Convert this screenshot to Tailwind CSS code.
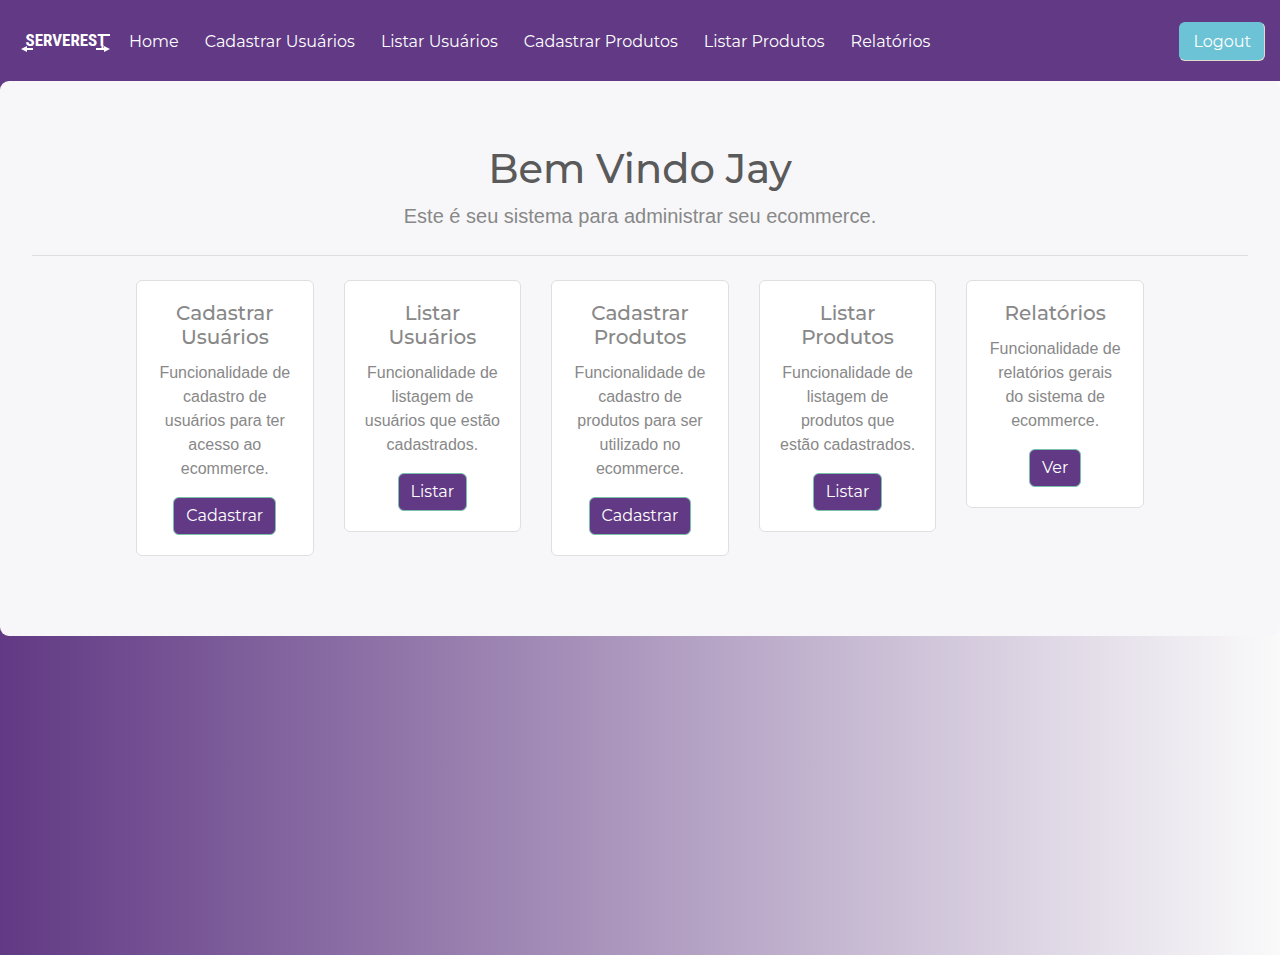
<!DOCTYPE html>
<html lang="pt-BR">
<head>
<meta charset="utf-8">
<meta name="viewport" content="width=device-width, initial-scale=1">
<title>Serverest</title>
<script src="https://cdn.jsdelivr.net/npm/@tailwindcss/browser@4"></script>
</head>
<body class="min-h-screen bg-linear-to-r/srgb from-[#613984] to-[#fafafa] font-['Liberation_Sans',Arial,sans-serif] text-base text-[#888888]">
<nav class="flex items-center bg-[#613984] px-4 pt-[22px] pb-5 font-['Montserrat','Inter',sans-serif] leading-6 text-white">
  <a href="#" aria-label="Serverest" class="ml-1 mr-[17px] flex w-[92px] shrink-0">
    <svg viewBox="0 0 92 28" class="h-7 w-full" fill="none" stroke="currentColor">
      <text x="46" y="18" text-anchor="middle" font-family="'Roboto Condensed','Open Sans Condensed','Roboto','Liberation Sans',sans-serif" font-weight="700" font-size="17" fill="currentColor" stroke="none">SERVEREST</text>
      <path d="M78 7H90" stroke-width="2"/>
      <path d="M82.500 17V22" stroke-width="2"/>
      <path d="M6 21H13M76 21H86" stroke-width="2"/>
      <path d="M1 21L7 18V24ZM90 21L84 18V24Z" fill="currentColor" stroke="none"/>
    </svg>
  </a>
  <div class="flex flex-1 gap-[26px] whitespace-nowrap">
    <a href="#">Home</a>
    <a href="#">Cadastrar Usuários</a>
    <a href="#">Listar Usuários</a>
    <a href="#">Cadastrar Produtos</a>
    <a href="#">Listar Produtos</a>
    <a href="#">Relatórios</a>
  </div>
  <button type="button" class="-mr-px h-[39px] rounded-md border border-[#6cc3d5] border-r-[#e2dccf] border-b-[#e2dccf] bg-[#6cc3d5] px-[13px]">Logout</button>
</nav>
<div class="bg-linear-to-r/srgb from-[#613984] to-[#fafafa]">
<main class="rounded-[9px] bg-[#f7f7f9] px-8 pt-16 pb-20 text-center">
  <h1 class="mb-2 font-['Montserrat','Inter',sans-serif] text-[40px] leading-12 font-medium text-[#5a5a5a]">Bem Vindo Jay</h1>
  <p class="text-xl leading-[30px]">Este é seu sistema para administrar seu ecommerce.</p>
  <hr class="my-6 border-[#dedee0]">
  <div class="mx-auto grid max-w-[1008px] grid-cols-5 items-start gap-[30px]">
    <article class="rounded-md border border-[#dfdfdf] bg-white p-5">
      <h2 class="mb-3 font-['Montserrat','Inter',sans-serif] text-xl leading-6 font-medium">Cadastrar Usuários</h2>
      <p class="mb-4">Funcionalidade de cadastro de usuários para ter acesso ao ecommerce.</p>
      <button type="button" class="block mx-auto h-[38px] rounded-md border border-[#78c2ad] bg-[#613984] px-3 font-['Montserrat','Inter',sans-serif] text-white">Cadastrar</button>
    </article>
    <article class="rounded-md border border-[#dfdfdf] bg-white p-5">
      <h2 class="mb-3 font-['Montserrat','Inter',sans-serif] text-xl leading-6 font-medium">Listar Usuários</h2>
      <p class="mb-4">Funcionalidade de listagem de usuários que estão cadastrados.</p>
      <button type="button" class="block mx-auto h-[38px] rounded-md border border-[#78c2ad] bg-[#613984] px-3 font-['Montserrat','Inter',sans-serif] text-white">Listar</button>
    </article>
    <article class="rounded-md border border-[#dfdfdf] bg-white p-5">
      <h2 class="mb-3 font-['Montserrat','Inter',sans-serif] text-xl leading-6 font-medium">Cadastrar Produtos</h2>
      <p class="mb-4">Funcionalidade de cadastro de produtos para ser utilizado no ecommerce.</p>
      <button type="button" class="block mx-auto h-[38px] rounded-md border border-[#78c2ad] bg-[#613984] px-3 font-['Montserrat','Inter',sans-serif] text-white">Cadastrar</button>
    </article>
    <article class="rounded-md border border-[#dfdfdf] bg-white p-5">
      <h2 class="mb-3 font-['Montserrat','Inter',sans-serif] text-xl leading-6 font-medium">Listar Produtos</h2>
      <p class="mb-4">Funcionalidade de listagem de produtos que estão cadastrados.</p>
      <button type="button" class="block mx-auto h-[38px] rounded-md border border-[#78c2ad] bg-[#613984] px-3 font-['Montserrat','Inter',sans-serif] text-white">Listar</button>
    </article>
    <article class="rounded-md border border-[#dfdfdf] bg-white p-5">
      <h2 class="mb-3 font-['Montserrat','Inter',sans-serif] text-xl leading-6 font-medium">Relatórios</h2>
      <p class="mb-4">Funcionalidade de relatórios gerais do sistema de ecommerce.</p>
      <button type="button" class="block mx-auto h-[38px] rounded-md border border-[#78c2ad] bg-[#613984] px-3 font-['Montserrat','Inter',sans-serif] text-white">Ver</button>
    </article>
  </div>
</main>
</div>
</body>
</html>
